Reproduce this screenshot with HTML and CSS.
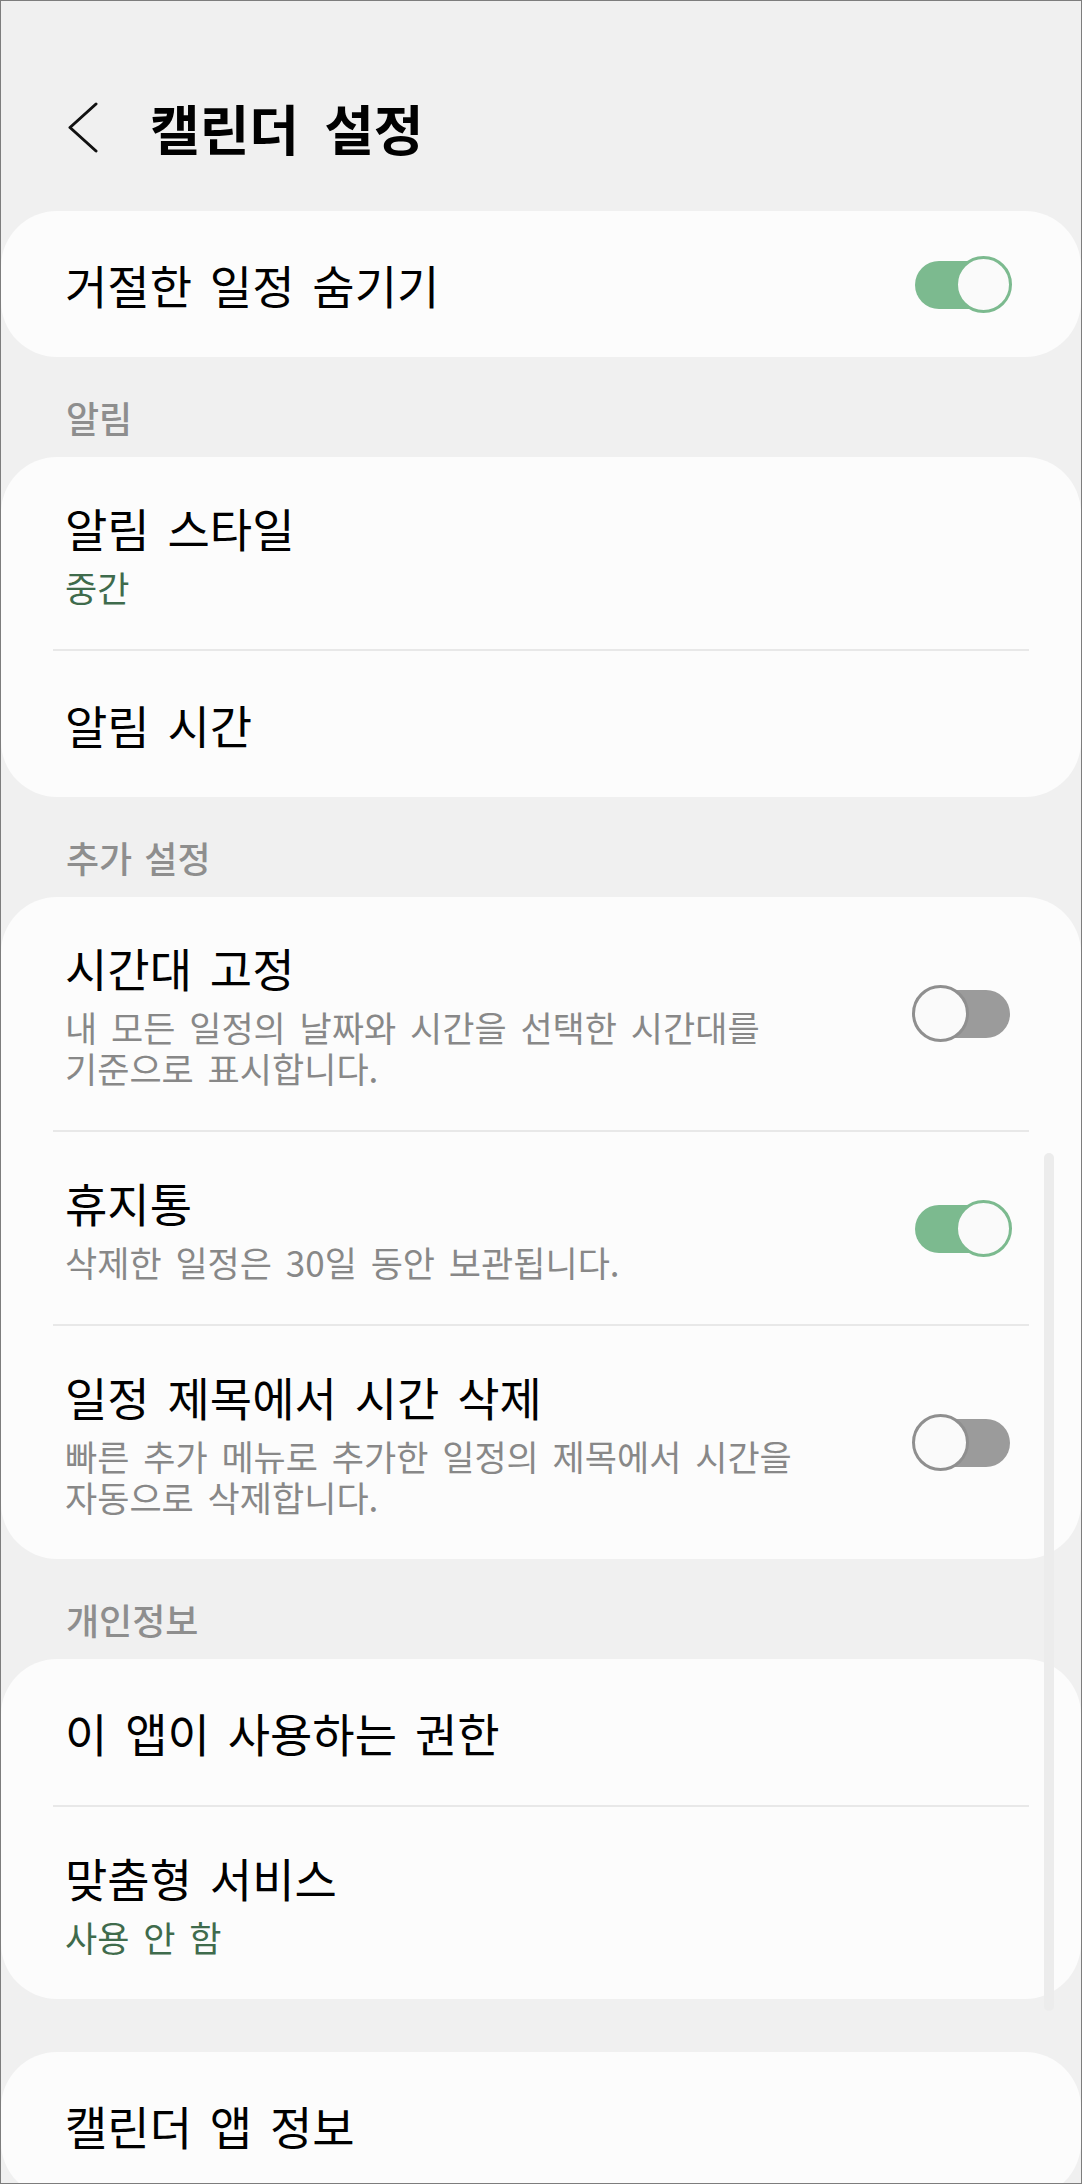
FILE: index.html
```html
<!DOCTYPE html>
<html lang="ko">
<head>
    <meta charset="UTF-8">
    <meta name="viewport" content="width=device-width, initial-scale=1.0">
    <title>캘린더 설정</title>
    <link rel="stylesheet" href="styles.css">
</head>
<body>

<div class="screen">
    <header class="topbar">
        <svg class="back" width="32" height="52" viewBox="0 0 32 52">
            <polyline points="29,2 3,25.5 29,49" fill="none" stroke="#111" stroke-width="3" stroke-linecap="round" stroke-linejoin="round"/>
        </svg>
        <h1>캘린더 설정</h1>
    </header>

    <section class="card">
        <div class="row">
            <div class="text">
                <div class="title">거절한 일정 숨기기</div>
            </div>
            <span class="switch on"></span>
        </div>
    </section>

    <h2 class="group">알림</h2>
    <section class="card">
        <div class="row">
            <div class="text">
                <div class="title">알림 스타일</div>
                <div class="value">중간</div>
            </div>
        </div>
        <div class="divider"></div>
        <div class="row">
            <div class="text">
                <div class="title">알림 시간</div>
            </div>
        </div>
    </section>

    <h2 class="group">추가 설정</h2>
    <section class="card">
        <div class="row">
            <div class="text">
                <div class="title">시간대 고정</div>
                <div class="desc">내 모든 일정의 날짜와 시간을 선택한 시간대를 기준으로 표시합니다.</div>
            </div>
            <span class="switch"></span>
        </div>
        <div class="divider"></div>
        <div class="row">
            <div class="text">
                <div class="title">휴지통</div>
                <div class="desc">삭제한 일정은 30일 동안 보관됩니다.</div>
            </div>
            <span class="switch on"></span>
        </div>
        <div class="divider"></div>
        <div class="row">
            <div class="text">
                <div class="title">일정 제목에서 시간 삭제</div>
                <div class="desc">빠른 추가 메뉴로 추가한 일정의 제목에서 시간을 자동으로 삭제합니다.</div>
            </div>
            <span class="switch"></span>
        </div>
    </section>

    <h2 class="group">개인정보</h2>
    <section class="card">
        <div class="row">
            <div class="text">
                <div class="title">이 앱이 사용하는 권한</div>
            </div>
        </div>
        <div class="divider"></div>
        <div class="row">
            <div class="text">
                <div class="title">맞춤형 서비스</div>
                <div class="value">사용 안 함</div>
            </div>
        </div>
    </section>

    <section class="card card-last">
        <div class="row">
            <div class="text">
                <div class="title">캘린더 앱 정보</div>
            </div>
        </div>
    </section>

    <div class="scrollbar"></div>
</div>

</body>
</html>
```

FILE: styles.css
```css
body {
    margin: 0;
    background-color: #f0f0f0;
    font-family: "Noto Sans CJK KR", "Noto Sans", sans-serif;
    color: #000;
}

.screen {
    position: relative;
    width: 1082px;
    height: 2184px;
    box-sizing: border-box;
    border: 1px solid #7d7d7d;
    background-color: #f0f0f0;
    overflow: hidden;
}

/* 상단 제목 영역 */
.topbar {
    display: flex;
    align-items: center;
    padding: 95px 0 0 66px;
    margin-bottom: 51px;
}

.back {
    flex-shrink: 0;
    margin-right: 51px;
}

.topbar h1 {
    margin: 0;
    font-size: 54px;
    font-weight: 700;
    line-height: 64px;
    word-spacing: 10px;
}

/* 카드 */
.card {
    background-color: #fcfcfc;
    border-radius: 56px;
}

.card-last {
    margin-top: 53px;
}

.group {
    margin: 0;
    padding: 40px 0 20px 65px;
    font-size: 36px;
    font-weight: 500;
    line-height: 40px;
    color: #8e8e8e;
    word-spacing: 2px;
}

.row {
    display: flex;
    align-items: center;
    min-height: 146px;
    box-sizing: border-box;
    padding: 42px 69px 42px 64px;
}

.text {
    flex: 1;
    min-width: 0;
    margin-right: 60px;
    word-break: keep-all;
}

.title {
    font-size: 46px;
    line-height: 56px;
    word-spacing: 5px;
}

.desc,
.value {
    margin-top: 11px;
    font-size: 35px;
    line-height: 41px;
    word-spacing: 4px;
}

.desc {
    color: #888;
}

.value {
    color: #3f6b4c;
}

.divider {
    height: 2px;
    margin: 0 52px;
    background-color: #e8e8e8;
}

/* 스위치 */
.switch {
    position: relative;
    flex-shrink: 0;
    width: 100px;
    height: 57px;
}

.switch::before {
    content: '';
    position: absolute;
    left: 3px;
    right: 2px;
    top: 5px;
    height: 48px;
    border-radius: 24px;
    background-color: #9b9b9b;
}

.switch::after {
    content: '';
    position: absolute;
    top: 0;
    left: 0;
    width: 57px;
    height: 57px;
    box-sizing: border-box;
    border: 3px solid #8f8f8f;
    border-radius: 50%;
    background-color: #fafafa;
}

.switch.on::before {
    background-color: #7cba8f;
}

.switch.on::after {
    left: auto;
    right: 0;
    border-color: #7cba8f;
}

.scrollbar {
    position: absolute;
    left: 1043px;
    top: 1152px;
    width: 10px;
    height: 858px;
    border-radius: 5px;
    background-color: #ececec;
}
```
